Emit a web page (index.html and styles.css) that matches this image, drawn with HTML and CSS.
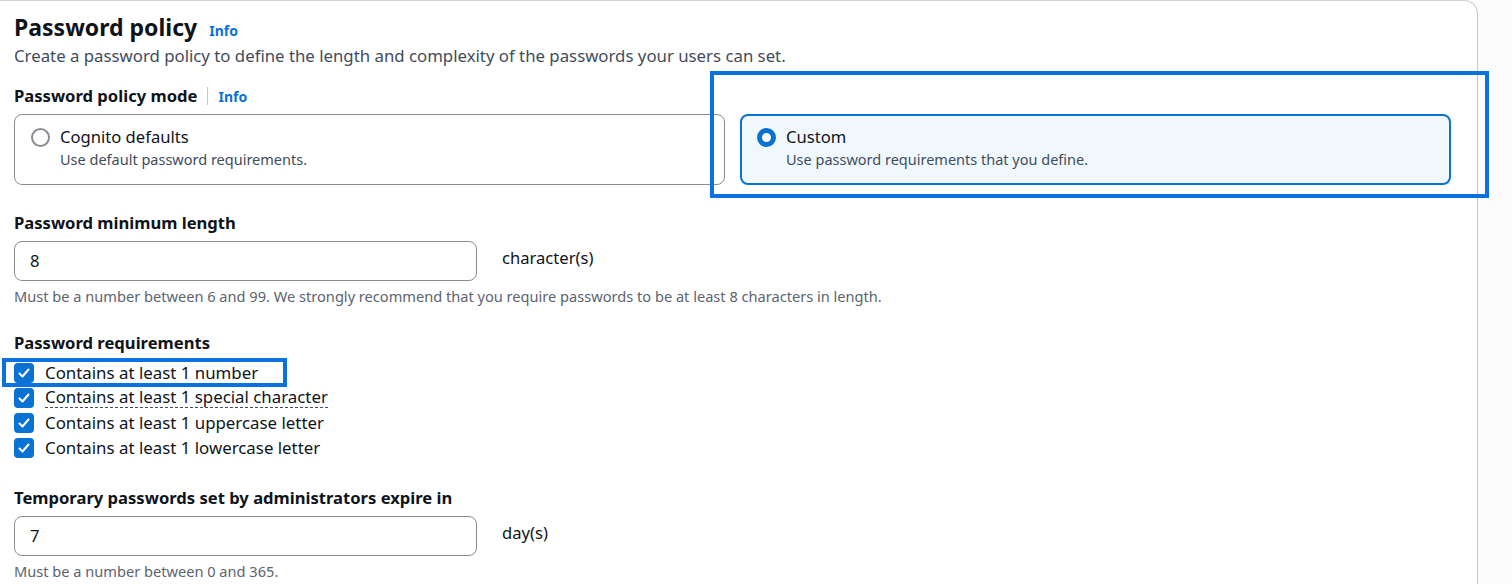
FILE: index.html
```html
<!DOCTYPE html>
<html>
<head>
<meta charset="utf-8">
<link rel="stylesheet" href="styles.css">
</head>
<body>
<div class="page">
  <div class="card">
    <div class="title-row">
      <h2 class="title">Password policy</h2>
      <a class="info">Info</a>
    </div>
    <p class="desc">Create a password policy to define the length and complexity of the passwords your users can set.</p>

    <div class="label-row label-mode">
      <span class="label">Password policy mode</span>
      <span class="divider"></span>
      <a class="info small">Info</a>
    </div>
    <div class="tiles">
      <div class="tile">
        <span class="radio"></span>
        <div class="tile-text">
          <div class="tile-title">Cognito defaults</div>
          <div class="tile-desc">Use default password requirements.</div>
        </div>
      </div>
      <div class="tile selected">
        <span class="radio checked"></span>
        <div class="tile-text">
          <div class="tile-title">Custom</div>
          <div class="tile-desc">Use password requirements that you define.</div>
        </div>
      </div>
    </div>

    <div class="label-row field-label">
      <span class="label">Password minimum length</span>
    </div>
    <div class="input-row">
      <div class="input">8</div>
      <span class="unit">character(s)</span>
    </div>
    <div class="hint">Must be a number between 6 and 99. We strongly recommend that you require passwords to be at least 8 characters in length.</div>

    <div class="label-row req-label">
      <span class="label">Password requirements</span>
    </div>
    <div class="checks">
      <div class="check"><span class="box"><svg viewBox="0 0 14 14" width="14" height="14"><path d="M2.5 7.5 L5.5 10.5 L11.5 3.5" fill="none" stroke="#fff" stroke-width="2" stroke-linecap="round" stroke-linejoin="round"/></svg></span><span class="check-text">Contains at least 1 number</span></div>
      <div class="check"><span class="box"><svg viewBox="0 0 14 14" width="14" height="14"><path d="M2.5 7.5 L5.5 10.5 L11.5 3.5" fill="none" stroke="#fff" stroke-width="2" stroke-linecap="round" stroke-linejoin="round"/></svg></span><span class="check-text dashed">Contains at least 1 special character</span></div>
      <div class="check"><span class="box"><svg viewBox="0 0 14 14" width="14" height="14"><path d="M2.5 7.5 L5.5 10.5 L11.5 3.5" fill="none" stroke="#fff" stroke-width="2" stroke-linecap="round" stroke-linejoin="round"/></svg></span><span class="check-text">Contains at least 1 uppercase letter</span></div>
      <div class="check"><span class="box"><svg viewBox="0 0 14 14" width="14" height="14"><path d="M2.5 7.5 L5.5 10.5 L11.5 3.5" fill="none" stroke="#fff" stroke-width="2" stroke-linecap="round" stroke-linejoin="round"/></svg></span><span class="check-text">Contains at least 1 lowercase letter</span></div>
    </div>

    <div class="label-row temp-label">
      <span class="label">Temporary passwords set by administrators expire in</span>
    </div>
    <div class="input-row">
      <div class="input">7</div>
      <span class="unit">day(s)</span>
    </div>
    <div class="hint">Must be a number between 0 and 365.</div>

    <div class="annot annot-custom"></div>
    <div class="annot annot-number"></div>
  </div>
  <div class="side"></div>
</div>
</body>
</html>
```
FILE: styles.css
```css
* { box-sizing: border-box; }
html, body { margin: 0; padding: 0; }
body {
  font-family: "Noto Sans", "Open Sans", sans-serif;
  color: #0f141a;
  background: #fbfbfb;
  width: 1512px;
  height: 584px;
  overflow: hidden;
}
.page {
  display: flex;
  height: 584px;
}
.card {
  position: relative;
  width: 1478px;
  flex: none;
  background: #fff;
  border-top: 1px solid #d1d1d6;
  border-right: 1px solid #c6c6cd;
  border-top-right-radius: 14px;
  padding: 11px 26px 0 14px;
}
.side { flex: 1; background: #fbfbfb; }

.title-row { display: flex; align-items: baseline; gap: 12px; height: 30px; }
.title {
  margin: 0;
  font-size: 23px;
  line-height: 30px;
  font-weight: 700;
  color: #0f141a;
}
.info {
  color: #0972d3;
  font-weight: 700;
  font-size: 14px;
}
.desc {
  margin: 3px 0 0;
  font-size: 16.8px;
  line-height: 22px;
  color: #414d5c;
}
.label-row { display: flex; align-items: center; height: 22px; }
.label { font-size: 16.6px; font-weight: 700; line-height: 22px; }
.label-mode { margin-top: 18px; }
.divider { width: 1px; height: 18px; background: #c6c6cd; margin: 0 10px; }

.tiles { display: flex; gap: 15px; margin-top: 7px; }
.tile {
  flex: 1;
  height: 71px;
  border: 1px solid #8c8c94;
  border-radius: 8px;
  display: flex;
  align-items: flex-start;
  padding: 12px 16px 0 16px;
}
.tile.selected {
  border: 2px solid #0972d3;
  background: #f0f8fe;
  padding: 11px 15px 0 15px;
}
.radio {
  width: 19px;
  height: 19px;
  border-radius: 50%;
  border: 2px solid #8c8c94;
  flex: none;
  margin-top: 1px;
  background: #fff;
}
.radio.checked { border: 5.5px solid #0972d3; }
.tile-text { margin-left: 10px; }
.tile-title { font-size: 16.6px; line-height: 20px; color: #0f141a; }
.tile-desc { font-size: 14.5px; line-height: 20px; color: #414d5c; margin-top: 2px; }

.field-label { margin-top: 27px; }
.input-row { display: flex; align-items: flex-start; margin-top: 7px; }
.input {
  width: 463px;
  height: 40px;
  border: 1px solid #8c8c94;
  border-radius: 8px;
  padding: 0 15px;
  font-size: 16.6px;
  line-height: 38px;
}
.unit { margin-left: 25px; font-size: 16.6px; line-height: 22px; margin-top: 6px; }
.hint { margin-top: 5px; font-size: 14.6px; line-height: 20px; color: #5b6470; }

.req-label { margin-top: 26px; }
.checks { margin-top: 6px; }
.check { display: flex; align-items: center; height: 25px; }
.box {
  width: 20px;
  height: 20px;
  border-radius: 4px;
  background: #0972d3;
  display: flex;
  align-items: center;
  justify-content: center;
  flex: none;
}
.check-text { margin-left: 11px; font-size: 16.85px; line-height: 22px; }
.check-text.dashed { border-bottom: 1px dashed #414d5c; line-height: 20px; }

.temp-label { margin-top: 27px; }

.annot { position: absolute; border: 4px solid #0a72e0; pointer-events: none; }
.annot-custom { left: 710px; top: 70px; width: 779px; height: 127px; }
.annot-number { left: 2px; top: 357px; width: 285px; height: 29px; }
```
